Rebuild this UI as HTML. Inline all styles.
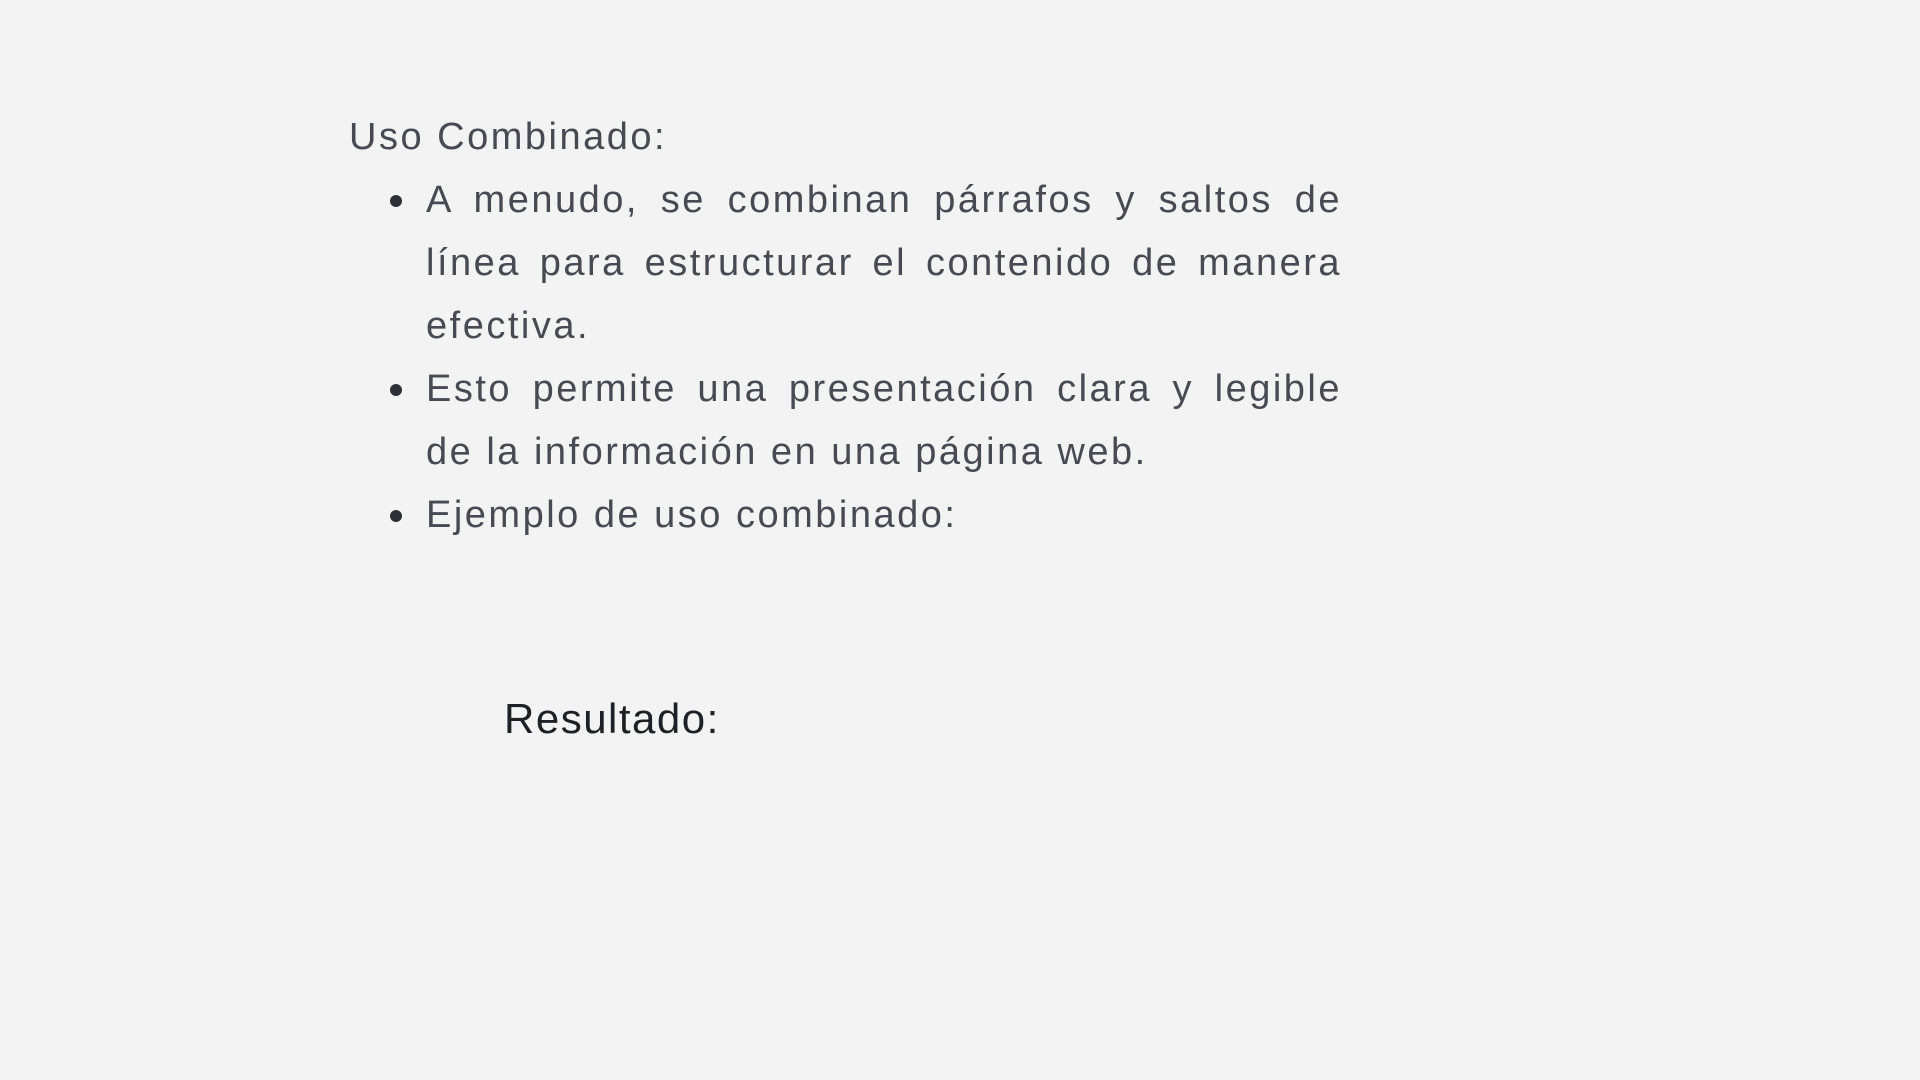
<!DOCTYPE html>
<html><head><meta charset="utf-8"><style>
html,body{margin:0;padding:0;}
body{width:1920px;height:1080px;background:#f3f3f3;font-family:"Liberation Sans",sans-serif;color:#474a52;position:relative;overflow:hidden;}
.l{position:absolute;font-size:38px;line-height:63px;white-space:nowrap;letter-spacing:2.5px;}
.j{width:916px;text-align:justify;text-align-last:justify;letter-spacing:2.5px;}
.dot{position:absolute;width:12px;height:12px;border-radius:50%;background:#2e3038;}
</style></head><body>
<div class="l" style="left:349px;top:106px;">Uso Combinado:</div>
<div class="dot" style="left:390px;top:195px;"></div>
<div class="l j" style="left:426px;top:169px;">A menudo, se combinan párrafos y saltos de</div>
<div class="l j" style="left:426px;top:232px;">línea para estructurar el contenido de manera</div>
<div class="l" style="left:426px;top:295px;">efectiva.</div>
<div class="dot" style="left:390px;top:384px;"></div>
<div class="l j" style="left:426px;top:358px;">Esto permite una presentación clara y legible</div>
<div class="l" style="left:426px;top:421px;">de la información en una página web.</div>
<div class="dot" style="left:390px;top:510px;"></div>
<div class="l" style="left:426px;top:484px;">Ejemplo de uso combinado:</div>
<div class="l" style="left:504px;top:687px;font-size:42px;color:#1e2026;letter-spacing:1.5px;">Resultado:</div>
</body></html>
